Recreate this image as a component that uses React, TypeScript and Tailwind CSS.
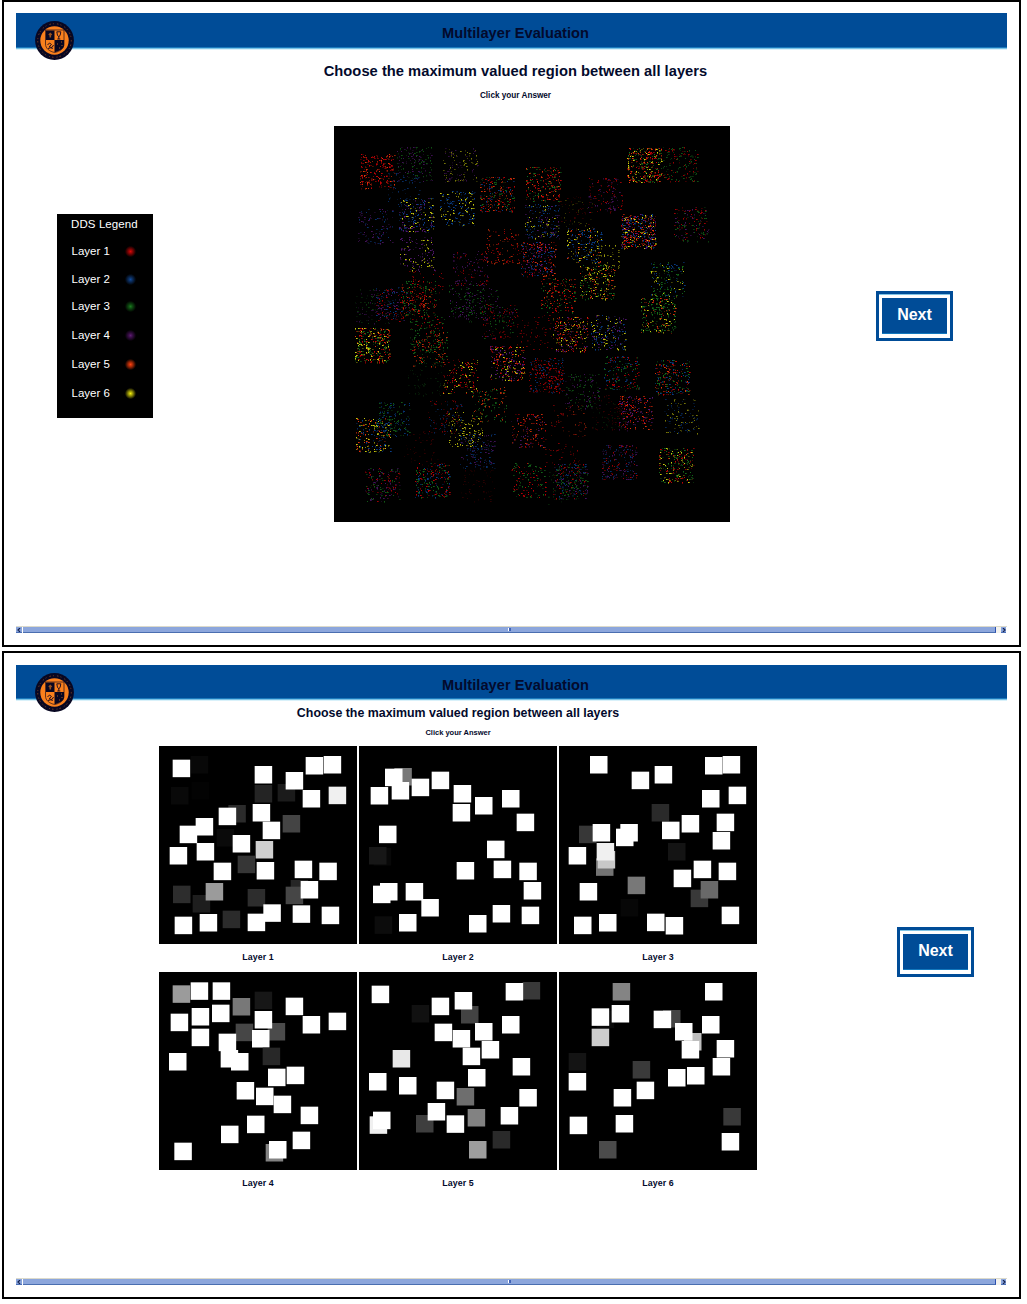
import React from "react";

const SQUARE = 52.5;

type Square = [x: number, y: number, shade?: number];

type Layer = { name: string; origin: [number, number]; squares: Square[] };

const layers: Layer[] = [
  {
    name: "Layer 1",
    origin: [27, 18],
    squares: [
      [123, 48, 8], [64, 141, 9], [126, 126, 3], [315, 135, 36], [384, 132, 27], [236, 195, 43], [201, 267, 10],
      [69, 59], [315, 78], [522, 48], [468, 51], [408, 96], [459, 150], [537, 140, 240],
      [207, 203], [309, 192], [399, 225, 68], [339, 245], [90, 257], [138, 234], [249, 285],
      [318, 303, 208], [60, 321], [141, 309], [264, 347, 54], [192, 368], [321, 366], [435, 362], [509, 368],
      [70, 437, 45], [129, 465, 30], [168, 429, 155], [294, 447, 45], [423, 420, 38], [408, 440, 70], [453, 423],
      [75, 530], [150, 522], [219, 512, 43], [294, 521], [341, 493], [429, 496], [516, 500],
    ],
  },
  {
    name: "Layer 2",
    origin: [27, 18],
    squares: [
      [134, 84, 120], [106, 86], [126, 126], [63, 141], [186, 116], [246, 95], [312, 135], [376, 171], [457, 150],
      [309, 192], [501, 221], [88, 257], [72, 324, 8], [58, 321, 23], [412, 302], [321, 366], [432, 362], [509, 368],
      [70, 437], [91, 429], [168, 429], [522, 426], [215, 477], [75, 529, 12], [148, 522], [358, 525], [429, 495], [516, 500],
    ],
  },
  {
    name: "Layer 3",
    origin: [627, 18],
    squares: [
      [721, 48], [846, 95], [915, 78], [1119, 48], [1066, 51], [1057, 150], [1137, 140], [906, 192, 42],
      [688, 257, 55], [729, 252], [799, 266], [812, 252], [937, 245], [996, 225], [1101, 221], [1089, 276],
      [955, 309, 20], [657, 321], [739, 355, 115], [744, 333, 200], [741, 309, 240], [834, 410, 120],
      [972, 389], [1032, 362], [1107, 368], [690, 429], [1023, 449, 57], [1053, 423, 105], [813, 477, 7],
      [673, 530], [748, 522], [892, 521], [948, 531], [1116, 500],
    ],
  },
  {
    name: "Layer 4",
    origin: [477, 2916],
    squares: [
      [519, 2956, 155], [573, 2947], [639, 2947], [699, 2994, 120], [765, 2975, 23], [858, 2993], [909, 3048], [987, 3038],
      [513, 3041], [576, 3024], [637, 3014], [708, 3071, 70], [804, 3069, 75], [765, 3033], [576, 3086], [757, 3090],
      [657, 3101], [663, 3150], [694, 3159], [789, 3143, 40], [508, 3159], [805, 3206], [861, 3200], [711, 3246],
      [769, 3263], [822, 3287], [903, 3320], [742, 3347], [664, 3377], [879, 3395], [524, 3428], [798, 3432, 130], [808, 3423],
    ],
  },
  {
    name: "Layer 5",
    origin: [27, 696],
    squares: [
      [66, 737], [519, 726, 57], [468, 729], [186, 795, 17], [246, 773], [334, 798, 67], [315, 756], [457, 828],
      [255, 851], [309, 870], [376, 849], [396, 903], [339, 923], [129, 930, 232], [489, 954], [58, 999], [148, 1011],
      [355, 987], [261, 1025], [321, 1044, 110], [509, 1047], [199, 1125, 62], [234, 1089], [291, 1126], [354, 1107, 130],
      [453, 1101], [60, 1129, 240], [70, 1115], [429, 1173, 42], [358, 1203, 158],
    ],
  },
  {
    name: "Layer 6",
    origin: [627, 696],
    squares: [
      [789, 729, 132], [1066, 729], [741, 812, 10], [726, 805], [786, 795], [940, 810, 68], [912, 812], [1057, 828],
      [726, 866, 205], [1003, 879, 190], [976, 849], [996, 903], [1101, 900], [1089, 954], [657, 939, 20], [849, 963, 58],
      [657, 999], [955, 987], [1012, 981], [861, 1025], [792, 1047], [660, 1130], [798, 1125], [1121, 1104, 57],
      [748, 1203, 75], [1116, 1179],
    ],
  },
];

const dotColors: Record<string, [number, number, number]> = {
  r: [225, 0, 5],
  b: [10, 72, 160],
  g: [24, 125, 30],
  p: [98, 26, 132],
  o: [255, 58, 10],
  y: [235, 235, 14],
};

// x, y, colour mix, number of dots, brightness
const patches: [number, number, string, number, number][] = [
  [26, 28, "rro", 215, 0.85], [63, 21, "gppg", 145, 0.62], [109, 22, "yppy", 120, 0.5], [54, 46, "b", 55, 0.6],
  [24, 83, "bp", 110, 0.7], [65, 72, "ybbp", 185, 0.85], [106, 65, "ybb", 165, 0.85], [146, 51, "obgr", 230, 0.8],
  [192, 41, "rgo", 190, 0.85], [66, 111, "ypp", 120, 0.8], [151, 103, "or", 105, 0.65], [187, 116, "rbpo", 235, 0.85],
  [119, 125, "rp", 125, 0.6], [191, 78, "ybpb", 185, 0.75], [21, 163, "pg", 95, 0.45], [41, 161, "bbrp", 155, 0.75],
  [67, 155, "orgg", 200, 0.75], [74, 144, "r", 48, 0.65], [115, 157, "gp", 105, 0.7], [131, 161, "pg", 95, 0.55],
  [148, 178, "rrpg", 130, 0.6], [254, 52, "rp", 115, 0.65], [293, 22, "yorg", 300, 0.9], [329, 21, "rg", 150, 0.65],
  [340, 81, "prg", 145, 0.7], [287, 88, "robyp", 390, 0.9], [233, 102, "yobb", 185, 0.85], [224, 70, "yr", 75, 0.25],
  [246, 139, "yog", 195, 0.8], [251, 119, "y", 60, 0.65], [316, 136, "ybgg", 160, 0.8], [307, 172, "yogg", 210, 0.85],
  [207, 152, "rog", 160, 0.8], [219, 191, "yopr", 240, 0.8], [257, 189, "ybpb", 180, 0.8], [183, 189, "r", 65, 0.5],
  [21, 202, "yrog", 300, 0.85], [76, 190, "rg", 130, 0.75], [79, 206, "og", 125, 0.75], [109, 233, "yrr", 145, 0.8],
  [156, 220, "yopr", 220, 0.85], [138, 261, "og", 115, 0.7], [22, 292, "yob", 190, 0.85], [41, 276, "bg", 155, 0.7],
  [94, 274, "br", 105, 0.5], [114, 286, "y", 110, 0.75], [126, 308, "pb", 150, 0.65], [177, 288, "rop", 130, 0.75],
  [31, 341, "rgp", 165, 0.7], [81, 337, "gbr", 220, 0.8], [177, 337, "rg", 120, 0.8], [126, 341, "r", 55, 0.18],
  [73, 236, "g", 60, 0.25], [195, 232, "rbr", 230, 0.7], [270, 230, "grb", 165, 0.75], [321, 234, "rogb", 220, 0.85],
  [231, 248, "pg", 125, 0.6], [284, 270, "rop", 190, 0.85], [330, 273, "by", 110, 0.5], [217, 276, "or", 60, 0.45],
  [258, 269, "rg", 110, 0.22], [268, 319, "rbp", 190, 0.65], [325, 322, "ygr", 210, 0.85], [219, 338, "brpg", 230, 0.7],
  [211, 317, "r", 45, 0.55], [70, 305, "r", 45, 0.2], [213, 345, "g", 40, 0.4],
];

function buildDots() {
  let state = 90210;
  const rand = () => {
    state = (Math.imul(state, 1664525) + 1013904223) >>> 0;
    return state / 4294967296;
  };
  const paths = new Map<string, string>();
  const add = (color: number[], strength: number, d: string) => {
    const fill = `rgb(${color.map((c) => Math.round(c * strength)).join(",")})`;
    paths.set(fill, (paths.get(fill) ?? "") + d);
  };
  for (const [px, py, mix, count, glow] of patches) {
    for (let i = 0; i < count; i++) {
      const x = px + Math.floor(rand() * 35);
      const y = py + Math.floor(rand() * 35);
      const level = rand();
      const strength = (level > 0.55 ? 1 : level > 0.25 ? 0.65 : 0.38) * glow;
      const color = dotColors[mix[Math.floor(rand() * mix.length)]];
      const spread = rand();
      add(color, strength, `M${x} ${y}h1v1h-1z`);
      if (spread > 0.6) add(color, strength * 0.7, `M${x + 1} ${y}h1v1h-1z`);
      else if (spread < 0.25) add(color, strength * 0.6, `M${x} ${y + 1}h1v1h-1z`);
    }
  }
  return [...paths.entries()];
}

const dots = buildDots();

function DotField() {
  return (
    <svg viewBox="0 0 396 396" className="block size-[396px] bg-black" shapeRendering="crispEdges">
      {dots.map(([fill, d]) => (
        <path key={fill} d={d} fill={fill} />
      ))}
    </svg>
  );
}

function Seal() {
  return (
    <svg viewBox="0 0 39 39" className="block size-[39px]">
      <circle cx="19.5" cy="19.5" r="19.4" fill="#080722" />
      <circle cx="19.5" cy="19.5" r="16.8" fill="none" stroke="#8a4a22" strokeWidth=".8" strokeDasharray="1 3.2 1.5 2" />
      <circle cx="19.5" cy="19.5" r="14.2" fill="#f9801d" />
      <path d="M10.500 9h18.500v14c0 4.500-4 7.500-9.200 8.500C14.500 30.500 10.500 27.500 10.500 23z" fill="#f9801d" stroke="#3d1d1b" strokeWidth=".8" />
      <path d="M11 9.500h8.500v9.500h-8.500z" fill="#080722" />
      <path d="M19.500 19h9.500v5c0 3.500-4 6-9.500 7.300z" fill="#080722" />
      <path d="M15.300 11.500l2 2-1.200 1v2h-1.600v-2l-1.200-1z" fill="#96501f" />
      <path d="M21.800 10.800h4l-.7 3.700-1.300 1-1.300-1zM23.800 15v3M22.300 18h3" fill="none" stroke="#241021" strokeWidth="1" />
      <path d="M12.500 24l2-2 2 1.500-2.500 2.300 3 .7 1.500-2.500M12.800 27.500l3-.7 2 .7" fill="none" stroke="#241021" strokeWidth="1" />
      <path d="M22 23h1M26 21h1M24 27h1M26.500 24.500h1" stroke="#a8591f" strokeWidth="1" />
    </svg>
  );
}

function Header({ short }: { short?: boolean }) {
  return (
    <header className="relative">
      <div className={`flex items-center justify-center bg-[#004c97] ${short ? "h-[33px]" : "h-[34px]"}`}>
        <h1 className="translate-x-[4px] translate-y-[3px] text-[14.6px] leading-4 font-bold tracking-[0.05px] text-[#030a2c]">
          Multilayer Evaluation
        </h1>
      </div>
      <div className="h-px bg-[#1b7abd]" />
      <div className="h-px bg-[#7cc3e6]" />
      <div className="-mb-px h-px bg-[#d9f1fa]" />
      <div className="absolute top-[8px] left-[19px]">
        <Seal />
      </div>
    </header>
  );
}

function ScrollBar() {
  return (
    <div className="flex h-[7px] border-t border-[#dcdacb]">
      <div className="flex w-[6px] items-center justify-center border-b border-[#4a6eb5] bg-[#88a4dc]">
        <svg viewBox="0 0 4 4" className="size-1">
          <path d="M3 0L1 2l2 2" fill="none" stroke="#14204c" strokeWidth="1.2" />
        </svg>
      </div>
      <div className="w-px bg-white" />
      <div className="flex w-[973px] items-start justify-center border-r border-b border-r-[#2c50b0] border-b-[#4a6eb0] bg-[#8ca6dc]">
        <div className="mt-px h-[3px] w-[3px] border-l border-white bg-[#4164b8]" />
      </div>
      <div className="w-[5px] bg-[#f3f2ee]" />
      <div className="flex w-[5px] items-center justify-center border-b border-[#4a6eb5] bg-[#88a4dc]">
        <svg viewBox="0 0 4 4" className="size-1">
          <path d="M1 0l2 2-2 2" fill="none" stroke="#14204c" strokeWidth="1.2" />
        </svg>
      </div>
    </div>
  );
}

function NextButton() {
  return (
    <button className="block h-[50px] w-[77px] border-[3px] border-[#004c97] bg-white px-[3px] py-[4px] shadow-[inset_0_1px_0_#7fc3e5]">
      <span className="flex h-full items-center justify-center border-b border-[#1277bd] bg-[#004c97] pb-[2px] text-[16px] leading-4 font-bold text-white">
        Next
      </span>
    </button>
  );
}

const legend = [
  { name: "Layer 1", row: "h-[27px]", dot: "bg-[radial-gradient(circle,#d80808_0%,#7e0303_30%,#000_72%)]" },
  { name: "Layer 2", row: "h-[28px]", dot: "bg-[radial-gradient(circle,#124a98_0%,#0a2955_30%,#000_72%)]" },
  { name: "Layer 3", row: "h-[27px]", dot: "bg-[radial-gradient(circle,#1b7a1f_0%,#0c430f_30%,#000_72%)]" },
  { name: "Layer 4", row: "h-[30px]", dot: "bg-[radial-gradient(circle,#5e1c72_0%,#330c40_30%,#000_72%)]" },
  { name: "Layer 5", row: "h-[28px]", dot: "bg-[radial-gradient(circle,#ff4210_0%,#9a2606_32%,#000_72%)]" },
  { name: "Layer 6", row: "h-[31px]", dot: "bg-[radial-gradient(circle,#f5f00c_0%,#8b8806_32%,#000_72%)]" },
];

function Legend() {
  return (
    <aside className="h-[204px] w-[96px] bg-black text-[11.5px] leading-[13px] text-white">
      <h3 className="pt-[4px] pl-[14px] pb-[7px] tracking-[0.1px] whitespace-nowrap">DDS Legend</h3>
      {legend.map((item) => (
        <div key={item.name} className={`flex items-center pl-[14.500px] ${item.row}`}>
          <span className="w-[53px]">{item.name}</span>
          <span className={`size-[11px] ${item.dot}`} />
        </div>
      ))}
    </aside>
  );
}

function LayerMap({ layer }: { layer: Layer }) {
  const [ox, oy] = layer.origin;
  return (
    <figure className="w-[198px]">
      <svg viewBox={`${ox + 1} ${oy} 594 594`} className="block size-[198px] bg-black">
        {layer.squares.map(([x, y, shade = 255], i) => (
          <rect key={i} x={x} y={y} width={SQUARE} height={SQUARE} fill={`rgb(${shade},${shade},${shade})`} />
        ))}
      </svg>
      <figcaption className="flex h-[28px] items-center justify-center pb-[2px] text-[8.8px] leading-3 font-bold tracking-[0.1px] text-[#030a2c]">
        {layer.name}
      </figcaption>
    </figure>
  );
}

export default function App() {
  return (
    <div className="h-[1304px] w-[1027px] overflow-hidden bg-white pl-[2px] font-['Liberation_Sans',Arial,sans-serif] text-[#030a2c]">
      <section className="flex h-[647px] w-[1019px] flex-col border-2 border-black pt-[11px] pr-[12px] pl-[12px]">
        <Header />
        <h2 className="mt-[14px] ml-[8px] text-center text-[14.7px] leading-4 font-bold tracking-[0.03px]">
          Choose the maximum valued region between all layers
        </h2>
        <p className="mt-[11px] h-3 translate-x-[4px] text-center text-[8.2px] leading-3 font-bold">
          Click your Answer
        </p>
        <main className="mt-[24px] flex h-[396px] items-start pl-[41px]">
          <div className="mt-[88px]">
            <Legend />
          </div>
          <div className="ml-[181px]">
            <DotField />
          </div>
          <div className="mt-[165px] ml-[146px]">
            <NextButton />
          </div>
        </main>
        <div className="mt-[104px]">
          <ScrollBar />
        </div>
      </section>

      <section className="mt-[4px] flex h-[648px] w-[1019px] flex-col border-2 border-black pt-[12px] pr-[12px] pl-[12px]">
        <Header short />
        <h2 className="mt-[5px] w-[884px] text-center text-[12.400px] leading-4 font-bold">
          Choose the maximum valued region between all layers
        </h2>
        <p className="mt-[6px] h-3 w-[884px] text-center text-[7.5px] leading-3 font-bold">Click your Answer</p>
        <main className="mt-[7px] flex h-[452px] items-start pl-[143px]">
          <div className="grid grid-cols-[198px_198px_198px] gap-x-[2px]">
            {layers.map((layer) => (
              <LayerMap key={layer.name} layer={layer} />
            ))}
          </div>
          <div className="mt-[181px] ml-[140px]">
            <NextButton />
          </div>
        </main>
        <div className="mt-[80px]">
          <ScrollBar />
        </div>
      </section>
    </div>
  );
}
